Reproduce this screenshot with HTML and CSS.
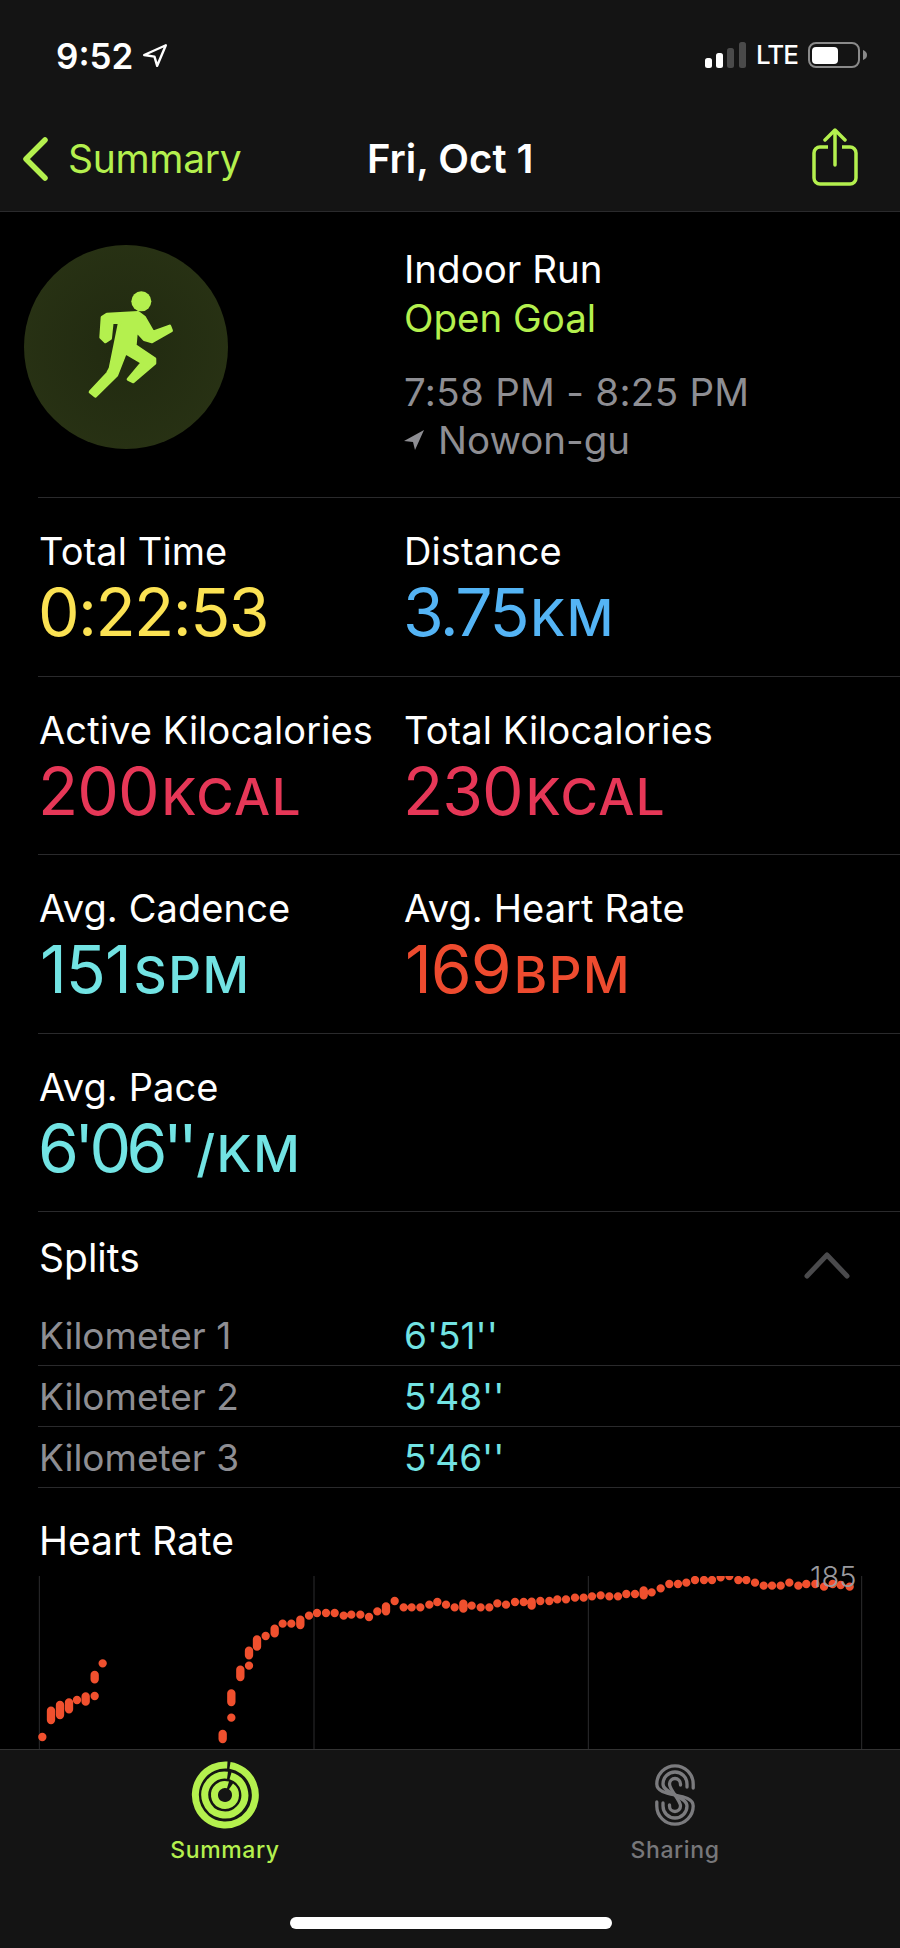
FILE: index.html
```html
<!DOCTYPE html>
<html lang="en">
<head>
<meta charset="utf-8">
<title>Fri, Oct 1</title>
<link rel="stylesheet" href="styles.css">
</head>
<body>
<div class="app">
  <header class="top">
    <div class="status">
      <div class="status-left">
        <span class="clock">9:52</span>
        <svg class="loc" viewBox="0 0 24 24"><path d="M22 3 2 12l9.500 1.500L14 22z" fill="none" stroke="#fff" stroke-width="2.200" stroke-linejoin="round"/></svg>
      </div>
      <div class="status-right">
        <svg class="signal" viewBox="0 0 41 26"><rect x="0" y="16" width="7" height="10" rx="2.500" fill="#fff"/><rect x="11" y="11" width="7" height="15" rx="2.500" fill="#fff"/><rect x="22" y="6" width="7" height="20" rx="2.500" fill="#4a4a4a"/><rect x="34" y="0" width="7" height="26" rx="2.500" fill="#4a4a4a"/></svg>
        <span class="lte">LTE</span>
        <svg class="battery" viewBox="0 0 60 26"><rect x="1" y="1" width="50" height="24" rx="7" fill="none" stroke="#8a8a8a" stroke-width="2"/><rect x="4" y="5" width="26" height="17" rx="4" fill="#fff"/><path d="M55 8c3 1 4 3 4 5s-1 4-4 5z" fill="#8a8a8a"/></svg>
      </div>
    </div>
    <nav class="nav">
      <div class="back">
        <svg class="chevron" viewBox="0 0 26 44"><path d="M23 3 4 22l19 19" fill="none" stroke="#b4f04e" stroke-width="5.500" stroke-linecap="round" stroke-linejoin="round"/></svg>
        <span>Summary</span>
      </div>
      <div class="nav-title">Fri, Oct 1</div>
      <svg class="share" viewBox="0 0 46 58"><path d="M16 19H8a6 6 0 0 0-6 6v25a6 6 0 0 0 6 6h30a6 6 0 0 0 6-6V25a6 6 0 0 0-6-6h-8" fill="none" stroke="#b4f04e" stroke-width="3.500"/><path d="M23 37V3M13 12l10-10 10 10" fill="none" stroke="#b4f04e" stroke-width="3.500" stroke-linecap="round" stroke-linejoin="round"/></svg>
    </nav>
  </header>

  <main class="content">
    <section class="hero">
      <div class="badge">
        <svg class="runner" viewBox="260 210 262 328">
          <circle cx="423" cy="244" r="30" fill="#b4f04e"/>
          <path d="M302 352 306 292 320 283 413 278 432 292 458 337 508 319 513 332 455 365 432 358 408 332 404 377 463 417 463 430 398 485 384 478 426 428 375 398 349 465 285 528 270 516 322 460 330 445 358 307 335 306 330 355 315 365z" fill="#b4f04e" stroke="#b4f04e" stroke-width="10" stroke-linejoin="round"/>
        </svg>
      </div>
      <div class="hero-text">
        <div class="hero-name">Indoor Run</div>
        <div class="hero-goal">Open Goal</div>
        <div class="hero-time">7:58 PM - 8:25 PM</div>
        <div class="hero-place">
          <svg class="place-arrow" viewBox="0 0 20 20"><path d="M20 0 0 11l9 1 2 8z" fill="#8e8e93"/></svg>
          <span>Nowon-gu</span>
        </div>
      </div>
    </section>

    <section class="metrics">
      <div class="metric"><div class="metric-label">Total Time</div><div class="metric-value yellow tight">0:22:53</div></div>
      <div class="metric"><div class="metric-label">Distance</div><div class="metric-value blue"><span class="tighter">3.75</span><span class="unit">KM</span></div></div>
    </section>
    <section class="metrics">
      <div class="metric"><div class="metric-label">Active Kilocalories</div><div class="metric-value pink">200<span class="unit">KCAL</span></div></div>
      <div class="metric"><div class="metric-label">Total Kilocalories</div><div class="metric-value pink">230<span class="unit">KCAL</span></div></div>
    </section>
    <section class="metrics">
      <div class="metric"><div class="metric-label">Avg. Cadence</div><div class="metric-value cyan lead-one">151<span class="unit">SPM</span></div></div>
      <div class="metric"><div class="metric-label">Avg. Heart Rate</div><div class="metric-value red lead-one">169<span class="unit">BPM</span></div></div>
    </section>
    <section class="metrics">
      <div class="metric"><div class="metric-label">Avg. Pace</div><div class="metric-value cyan"><span class="pace">6'06''</span><span class="unit">/KM</span></div></div>
    </section>

    <section class="splits">
      <div class="splits-head">
        <span>Splits</span>
        <svg class="collapse" viewBox="0 0 46 28"><path d="M3 25 23 4l20 21" fill="none" stroke="#4a4a4c" stroke-width="5" stroke-linecap="round" stroke-linejoin="round"/></svg>
      </div>
      <div class="split"><span class="split-name">Kilometer 1</span><span class="split-value">6'51''</span></div>
      <div class="split"><span class="split-name">Kilometer 2</span><span class="split-value">5'48''</span></div>
      <div class="split"><span class="split-name">Kilometer 3</span><span class="split-value">5'46''</span></div>
    </section>

    <section class="heart">
      <div class="heart-title">Heart Rate</div>
      <div class="chart">
        <svg class="chart-svg" viewBox="0 168 2700 519">
          <path d="M118 168V687M942 168V687M1765 168V687M2585 168V687" stroke="#2c2c2e" stroke-width="3" fill="none"/>
          <path class="hr" d="M127 651h0M153 572V600M180 555V585M207 547V568M231 540h0M257 529V545M284 528h0M284 465V478M308 430h0M668 642V657M694 593h0M694 520V546M721 449V471M747 437h0M747 392V406M771 358V380M797 348h0M824 326V340M848 311h0M874 311h0M901 299V315M927 287h0M951 279h0M978 279h0M1004 279h0M1031 287h0M1054 284h0M1081 284h0M1107 291h0M1132 274h0M1158 259V274M1184 243h0M1211 262h0M1235 262h0M1261 262h0M1288 254h0M1312 246h0M1338 254h0M1364 262h0M1390 251V266M1415 257h0M1442 262h0M1468 262h0M1492 250h0M1518 254h0M1545 246h0M1571 246h0M1595 245V257M1621 243h0M1648 243h0M1672 238h0M1698 238h0M1725 233h0M1751 233h0M1776 229h0M1802 226h0M1828 229h0M1854 229h0M1879 222h0M1905 222h0M1931 211V226M1955 217h0M1982 205h0M2008 192h0M2034 192h0M2059 188h0M2085 180h0M2112 180h0M2136 180h0M2162 172h0M2188 168h0M2215 180h0M2239 180h0M2265 188h0M2291 197h0M2316 197h0M2342 197h0M2368 188h0M2395 197h0M2419 192h0M2446 192h0M2472 200h0M2498 192h0M2522 195h0M2549 200h0"/>
        </svg>
        <span class="chart-max">185</span>
      </div>
    </section>
  </main>

  <footer class="tabbar">
    <div class="tabs">
      <div class="tab tab-on">
        <svg class="rings" viewBox="0 0 68 68"><g fill="none" stroke="#b4f04e" stroke-width="7"><path d="M39 4.400A30 30 0 1 1 36.300 4.100"/><path d="M39.500 14.800A20 20 0 1 1 36.500 14.160"/><path d="M40 25.400A10.500 10.500 0 1 1 37 23.950"/></g></svg>
        <span>Summary</span>
      </div>
      <div class="tab tab-off">
        <svg class="links" viewBox="0 0 40 62"><g fill="none" stroke="#7b7b7e" stroke-width="3.300" stroke-linecap="round"><path d="M38.200 24V20A18.200 18.200 0 0 0 1.800 20C1.800 34.500 38.200 27.500 38.200 42A18.200 18.200 0 0 1 1.800 42V38"/><path d="M32 23V20A12 12 0 0 0 8 20C8 30 32 32 32 42A12 12 0 0 1 8 42V39"/><path d="M25.500 21V20A5.500 5.500 0 0 0 14.500 20C14.500 26 25.500 36 25.500 42A5.500 5.500 0 0 1 14.500 42V41"/></g></svg>
        <span>Sharing</span>
      </div>
    </div>
    <div class="home"></div>
  </footer>
</div>
</body>
</html>
```
FILE: styles.css
```css
* { box-sizing: border-box; }
html, body { margin: 0; padding: 0; background: #000; }
body { font-family: Inter, "Liberation Sans", sans-serif; color: #fff; }
.app { width: 900px; height: 1948px; display: flex; flex-direction: column; overflow: hidden; background: #000; }

.top { height: 212px; background: #141414; border-bottom: 1px solid #2a2a2c; flex: none; }
.status { height: 106px; padding: 40px 32px 0 56px; display: flex; justify-content: space-between; align-items: flex-start; }
.status-left { display: flex; align-items: center; gap: 9px; }
.clock { font-size: 35px; font-weight: 600; line-height: 32px; letter-spacing: 0; }
.loc { width: 26px; height: 26px; margin-top: -3px; }
.status-right { display: flex; align-items: center; gap: 10px; padding-top: 2px; }
.signal { width: 41px; height: 26px; }
.lte { font-size: 26px; font-weight: 500; line-height: 26px; letter-spacing: -1px; }
.battery { width: 60px; height: 26px; }

.nav { position: relative; height: 105px; padding: 0 42px 0 22px; display: flex; align-items: center; justify-content: space-between; }
.back { display: flex; align-items: center; gap: 20px; color: #b4f04e; font-size: 39px; letter-spacing: -0.3px; }
.chevron { width: 26px; height: 44px; }
.nav-title { position: absolute; left: 367px; font-size: 40px; font-weight: 600; }
.share { width: 46px; height: 58px; margin-top: -4px; }

.content { flex: 1; min-height: 0; }
.hero { height: 286px; display: flex; border-bottom: 1px solid #2a2a2c; margin-left: 38px; padding-top: 33px; position: relative; }
.badge { position: absolute; left: -14px; top: 33px; width: 204px; height: 204px; border-radius: 50%; background: radial-gradient(circle, #212a10 0%, #2a3415 100%); display: flex; align-items: center; justify-content: center; }
.runner { width: 87.300px; height: 109.300px; margin-top: -4px; margin-left: 8.600px; }
.hero-text { margin-left: 366px; font-size: 38.500px; line-height: 49px; }
.hero-goal { color: #b4f04e; }
.hero-time { color: #8e8e93; margin-top: 24px; line-height: 50px; letter-spacing: 0.3px; }
.hero-place { color: #8e8e93; display: flex; align-items: center; gap: 14px; line-height: 50px; margin-top: -2px; }
.place-arrow { width: 20px; height: 20px; }

.metrics { height: 178.500px; margin-left: 38px; border-bottom: 1px solid #2a2a2c; display: grid; grid-template-columns: 365px 1fr; padding: 30px 0 0 1px; }
.metric-label { font-size: 38px; line-height: 46px; letter-spacing: 0.1px; }
.metric-value { font-size: 66px; line-height: 72px; letter-spacing: -1px; margin-top: 2px; margin-left: -1px; }
.lead-one { margin-left: 1px; }
.tight { letter-spacing: -1.600px; }
.tighter { letter-spacing: -2.500px; }
.pace { letter-spacing: -4.600px; }
.unit { font-size: 51px; font-weight: 500; letter-spacing: 1.500px; margin-left: 3px; }
.yellow { color: #fbe253; }
.blue { color: #54b4f5; }
.pink { color: #e63757; }
.cyan { color: #72e3e3; }
.red { color: #ee4b2f; }

.splits { margin-left: 38px; }
.splits-head { height: 93px; display: flex; justify-content: space-between; align-items: center; padding: 0 50px 2px 1px; font-size: 39px; }
.collapse { width: 46px; height: 28px; margin-top: 14px; }
.split { height: 61px; border-bottom: 1px solid #2a2a2c; display: grid; grid-template-columns: 365px 1fr; padding-left: 1px; align-items: center; font-size: 37px; }
.split-name { color: #8e8e93; }
.split-value { color: #72e3e3; }

.heart { padding-top: 30px; }
.heart-title { font-size: 39px; line-height: 46px; padding-left: 39px; }
.chart { position: relative; margin-top: 12px; height: 173px; }
.chart-svg { display: block; width: 900px; height: 173px; }
.hr { fill: none; stroke: #f0502e; stroke-width: 25; stroke-linecap: round; }
.chart-max { position: absolute; left: 810px; top: -14px; font-size: 29px; font-weight: 300; color: #9a9a9e; line-height: 30px; }

.tabbar { height: 199px; flex: none; background: #141414; border-top: 1px solid #333; position: relative; }
.tabs { display: grid; grid-template-columns: 450px 450px; padding-top: 11px; }
.tab { display: flex; flex-direction: column; align-items: center; font-size: 23px; font-weight: 500; letter-spacing: 0.6px; gap: 7px; }
.tab-on { color: #b4f04e; }
.tab-off { color: #77777a; }
.rings { width: 68px; height: 68px; }
.links { width: 40px; height: 62px; margin-top: 3px; margin-bottom: 3px; }
.home { position: absolute; left: 290px; top: 167px; width: 322px; height: 12px; border-radius: 6px; background: #fff; }
```
